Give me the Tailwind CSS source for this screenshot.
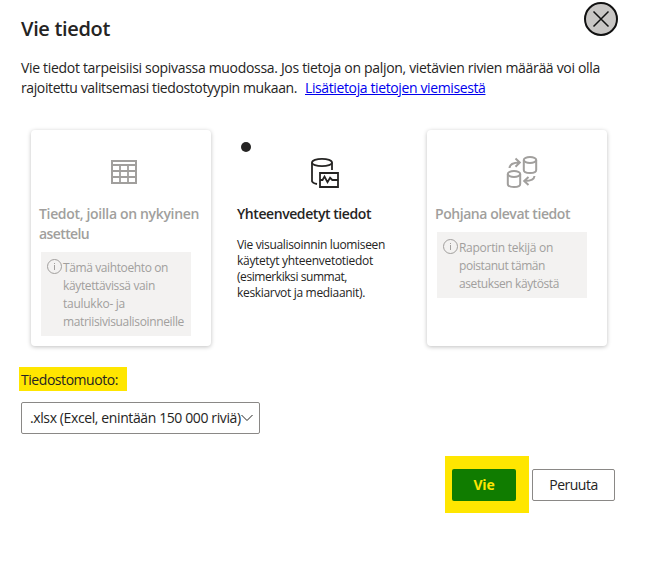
<!DOCTYPE html>
<html lang="fi">
<head>
<meta charset="utf-8">
<title>Vie tiedot</title>
<script src="https://cdn.jsdelivr.net/npm/@tailwindcss/browser@4"></script>
</head>
<body class="bg-white">
<main class="relative h-[567px] w-[647px] overflow-hidden bg-white pl-[21px] font-['Open_Sans','Noto_Sans',sans-serif] text-sm text-[#252423] [&_span]:whitespace-nowrap">
  <button aria-label="Sulje" class="absolute left-[584px] top-[2px] size-[34px] rounded-full border-2 border-[#111] bg-[#c8c6c4]">
    <svg class="block size-[30px]" viewBox="0 0 30 30" fill="none" stroke="#111" stroke-width="1.5"><path d="M7.5 7.5l15 15M22.5 7.5l-15 15"/></svg>
  </button>
  <h1 class="pt-[15px] text-xl leading-7 font-semibold tracking-[-0.334px]">Vie tiedot</h1>
  <div class="mt-[15px] leading-5">
    <span class="block tracking-[-0.317px]">Vie tiedot tarpeisiisi sopivassa muodossa. Jos tietoja on paljon, vietävien rivien määrää voi olla</span>
    <div class="flex"><span class="w-[284px] tracking-[-0.389px]">rajoitettu valitsemasi tiedostotyypin mukaan.</span><a class="whitespace-nowrap tracking-[-0.382px] text-[#0000ee] underline">Lisätietoja tietojen viemisestä</a></div>
  </div>
  <section class="mt-8 ml-[10px] flex gap-[18px]">
    <article class="h-[216px] w-[180px] rounded bg-white pl-2 pt-[26px] text-[#a19f9d] shadow-[0_1px_4px_rgba(0,0,0,0.25)]">
      <svg class="ml-[70px] block size-8" viewBox="0 0 32 32" fill="none" stroke="#a19f9d" stroke-width="2"><path d="M3 5h24v22H3z"/><path stroke-width="1.8" d="M3 9h24M3 15h24M3 21h24M11 9v18M19 9v18"/></svg>
      <h2 class="mt-4 flex flex-col leading-5 font-semibold"><span class="tracking-[-0.337px]">Tiedot, joilla on nykyinen</span><span class="tracking-[-0.6px]">asettelu</span></h2>
      <div class="mt-2 ml-[2px] flex h-[84px] w-[150px] gap-px bg-[#f3f2f1] pl-[6px] pt-[7px] text-xs leading-[18px]">
        <svg class="size-[15px] shrink-0" viewBox="0 0 15 15" fill="none" stroke="#a19f9d"><circle cx="7.5" cy="7.5" r="7"/><path d="M7.5 6v5M7.5 4v1"/></svg>
        <p class="flex flex-col"><span class="tracking-[-0.39px]">Tämä vaihtoehto on</span><span class="tracking-[-0.363px]">käytettävissä vain</span><span class="tracking-[-0.267px]">taulukko- ja</span><span class="tracking-[-0.354px]">matriisivisualisoinneille</span></p>
      </div>
    </article>
    <article class="relative h-[216px] w-[180px] pl-2 pt-[26px]">
      <span class="absolute left-[12px] top-[12px] size-[10px] rounded-full bg-[#252423]"></span>
      <svg class="ml-[72px] block size-8" viewBox="0 0 32 32" fill="none" stroke="#252423" stroke-width="1.8"><ellipse cx="13" cy="6.5" rx="10" ry="3.7"/><path d="M3 6.5v18.8q.5 1.8 5 2.7M23 6.5V14M11 17h18v14H11zM11.5 24h2l2-3.4 3 5.6 2.6-4.4 2.2 2.2H29"/></svg>
      <h2 class="mt-4 leading-5 font-semibold"><span class="tracking-[-0.429px]">Yhteenvedetyt tiedot</span></h2>
      <p class="mt-[13px] flex flex-col text-xs leading-4"><span class="tracking-[-0.334px]">Vie visualisoinnin luomiseen</span><span class="tracking-[-0.291px]">käytetyt yhteenvetotiedot</span><span class="tracking-[-0.432px]">(esimerkiksi summat,</span><span class="tracking-[-0.321px]">keskiarvot ja mediaanit).</span></p>
    </article>
    <article class="h-[216px] w-[180px] rounded bg-white pl-2 pt-[26px] text-[#a19f9d] shadow-[0_1px_4px_rgba(0,0,0,0.25)]">
      <svg class="ml-[70px] block size-8 overflow-visible" viewBox="0 0 32 32" fill="none" stroke="#a19f9d" stroke-width="2"><ellipse cx="25" cy="4" rx="6.2" ry="3"/><path d="M18.8 4v10c0 4 12.4 4 12.4 0V4"/><ellipse cx="9" cy="18" rx="6.2" ry="3"/><path d="M2.8 18v10c0 4 12.4 4 12.4 0V18M4.5 12q.5-5.5 10-5.5M10.500 2.500l4.300 4-4.300 4.200M29.500 20q-.5 5-9.500 5M23.500 21l-4.300 4 4.300 4"/></svg>
      <h2 class="mt-4 leading-5 font-semibold"><span class="tracking-[-0.444px]">Pohjana olevat tiedot</span></h2>
      <div class="mt-2 ml-[2px] flex h-[66px] w-[150px] gap-px bg-[#f3f2f1] pl-[6px] pt-[7px] text-xs leading-[18px]">
        <svg class="size-[15px] shrink-0" viewBox="0 0 15 15" fill="none" stroke="#a19f9d"><circle cx="7.5" cy="7.5" r="7"/><path d="M7.5 6v5M7.5 4v1"/></svg>
        <p class="flex flex-col"><span class="tracking-[-0.282px]">Raportin tekijä on</span><span class="tracking-[-0.43px]">poistanut tämän</span><span class="tracking-[-0.398px]">asetuksen käytöstä</span></p>
      </div>
    </article>
  </section>
  <label class="mt-[21px] -ml-[2px] block h-6 w-[108px] bg-[#ffe600] pl-[2px] leading-[25px] tracking-[-0.446px]">Tiedostomuoto:</label>
  <div class="mt-[11px] flex h-8 w-[239px] items-center rounded-xs border border-[#8a8886] pl-2"><span class="w-[211px] tracking-[-0.39px]">.xlsx (Excel, enintään 150 000 riviä)</span><svg class="size-3 shrink-0" viewBox="0 0 12 12" fill="none" stroke="#252423"><path d="M.5 3L6 8.5 11.5 3"/></svg></div>
  <div class="mt-[22px] ml-[424px] flex gap-[3px]">
    <div class="h-[57px] w-[84px] bg-[#ffe600] pl-[7px] pt-[13px]"><button class="flex h-8 w-16 items-center justify-center rounded-xs bg-[#107c00] font-bold tracking-[-0.2px] text-[#ffe600]">Vie</button></div>
    <button class="mt-[13px] flex h-8 w-[83px] items-center justify-center rounded-xs border border-[#8a8886] font-medium tracking-[-0.5px]">Peruuta</button>
  </div>
</main>
</body>
</html>
